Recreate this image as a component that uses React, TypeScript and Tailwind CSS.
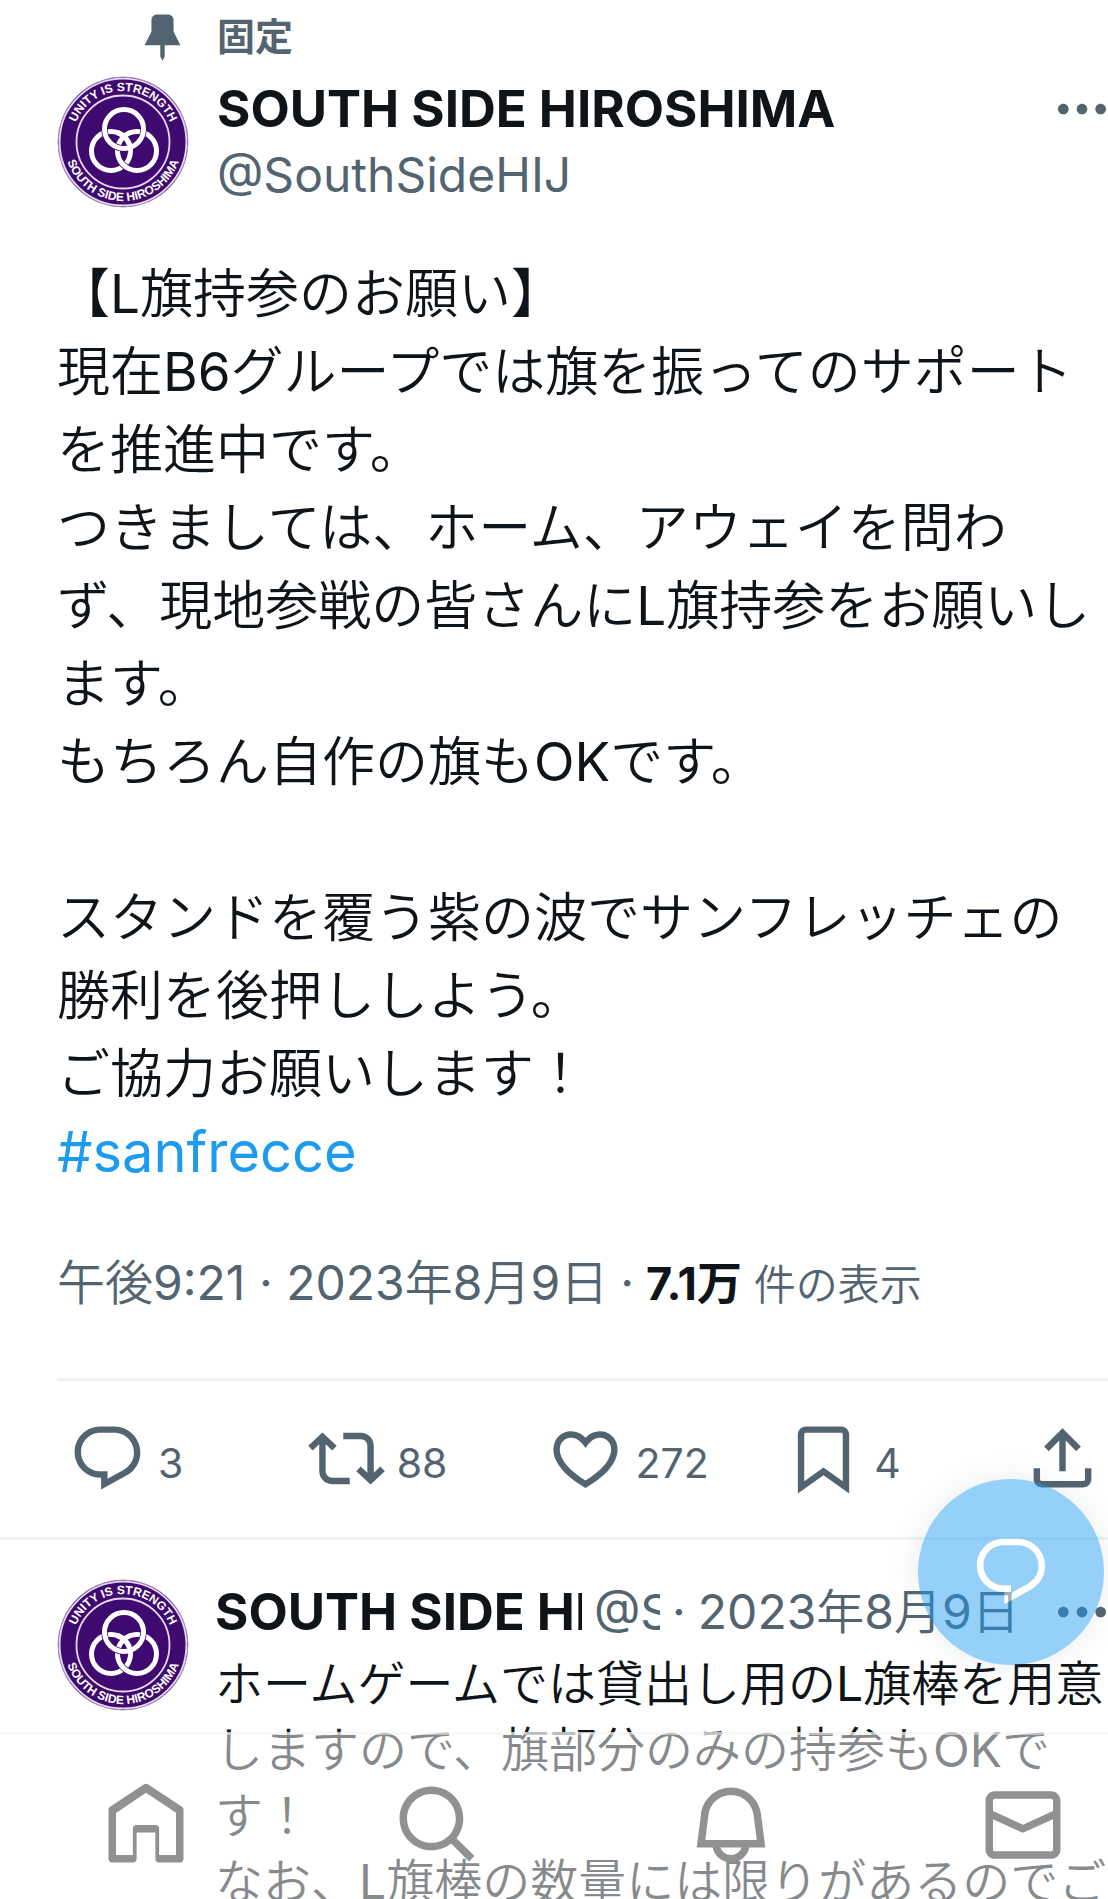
import React, { useId } from 'react';

const paths = {
  pin: 'M7 4.5C7 3.12 8.12 2 9.5 2h5C15.88 2 17 3.12 17 4.5v5.26L20.12 16H13v5l-1 2-1-2v-5H3.88L7 9.76V4.5z',
  more: 'M3 12c0-1.1.9-2 2-2s2 .9 2 2-.9 2-2 2-2-.9-2-2zm9 2c1.1 0 2-.9 2-2s-.9-2-2-2-2 .9-2 2 .9 2 2 2zm7 0c1.1 0 2-.9 2-2s-.9-2-2-2-2 .9-2 2 .9 2 2 2z',
  reply: 'M1.751 10c0-4.42 3.584-8 8.005-8h4.366c4.49 0 8.129 3.64 8.129 8.13 0 2.96-1.607 5.68-4.196 7.11l-8.054 4.46v-3.69h-.067c-4.49.1-8.183-3.51-8.183-8.01zm8.005-6c-3.317 0-6.005 2.69-6.005 6 0 3.37 2.77 6.08 6.138 6.01l.351-.01h1.761v2.3l5.087-2.81c1.951-1.08 3.163-3.13 3.163-5.36 0-3.39-2.744-6.13-6.129-6.13H9.756z',
  repost: 'M4.5 3.88l4.432 4.14-1.364 1.46L5.5 7.55V16c0 1.1.896 2 2 2H13v2H7.5c-2.209 0-4-1.79-4-4V7.55L1.432 9.48.068 8.02 4.5 3.88zM16.5 6H11V4h5.5c2.209 0 4 1.79 4 4v8.45l2.068-1.93 1.364 1.46-4.432 4.14-4.432-4.14 1.364-1.46 2.068 1.93V8c0-1.1-.896-2-2-2z',
  like: 'M16.697 5.5c-1.222-.06-2.679.51-3.89 2.16l-.805 1.09-.806-1.09C9.984 6.01 8.526 5.44 7.304 5.5c-1.243.07-2.349.78-2.91 1.91-.552 1.12-.633 2.78.479 4.82 1.074 1.97 3.257 4.27 7.129 6.61 3.87-2.34 6.052-4.64 7.126-6.61 1.111-2.04 1.03-3.7.477-4.82-.561-1.13-1.666-1.84-2.908-1.91zm4.187 7.69c-1.351 2.48-4.001 5.12-8.379 7.67l-.503.3-.504-.3c-4.379-2.55-7.029-5.19-8.382-7.67-1.36-2.5-1.41-4.86-.514-6.67.887-1.79 2.647-2.91 4.601-3.01 1.651-.09 3.368.56 4.798 2.01 1.429-1.45 3.146-2.1 4.796-2.01 1.954.1 3.714 1.22 4.601 3.01.896 1.81.846 4.17-.514 6.67z',
  bookmark: 'M4 4.5C4 3.12 5.119 2 6.5 2h11C18.881 2 20 3.12 20 4.5v18.44l-8-5.71-8 5.71V4.5zM6.5 4c-.276 0-.5.22-.5.5v14.56l6-4.29 6 4.29V4.5c0-.28-.224-.5-.5-.5h-11z',
  share: 'M12 2.59l5.7 5.7-1.41 1.42L13 6.41V16h-2V6.41l-3.3 3.3-1.41-1.42L12 2.59zM21 15v3.5c0 1.38-1.12 2.5-2.5 2.5h-13C4.12 21 3 19.88 3 18.5V15h2v3.5c0 .28.22.5.5.5h13c.28 0 .5-.22.5-.5V15h2z',
  home: 'M21.591 7.146L12.52 1.157c-.316-.21-.724-.21-1.04 0l-9.071 5.99c-.26.173-.409.456-.409.757v13.183c0 .502.418.913.929.913h5.642c.511 0 .929-.41.929-.913V14h5v7.087c0 .502.418.913.929.913h5.642c.511 0 .929-.41.929-.913V7.904c0-.301-.158-.584-.409-.758zM20 20h-4.5v-7.087c0-.502-.418-.913-.928-.913H9.428c-.511 0-.928.41-.928.913V20H4V8.773l8-5.342 8 5.333V20z',
  search: 'M10.25 3.75c-3.59 0-6.5 2.91-6.5 6.5s2.91 6.5 6.5 6.5c1.795 0 3.419-.726 4.596-1.904 1.178-1.177 1.904-2.801 1.904-4.596 0-3.59-2.91-6.5-6.5-6.5zm-8.5 6.5c0-4.694 3.806-8.5 8.5-8.5s8.5 3.806 8.5 8.5c0 1.986-.682 3.815-1.824 5.262l4.781 4.781-1.414 1.414-4.781-4.781c-1.447 1.142-3.276 1.824-5.262 1.824-4.694 0-8.5-3.806-8.5-8.5z',
  bell: 'M19.993 9.042C19.48 5.017 16.054 2 11.996 2s-7.49 3.021-7.999 7.051L2.866 18H7.1c.463 2.282 2.481 4 4.9 4s4.437-1.718 4.9-4h4.236l-1.143-8.958zM12 20c-1.306 0-2.417-.835-2.829-2h5.658c-.412 1.165-1.523 2-2.829 2zm-6.866-4l.847-6.698C6.364 6.272 8.941 4 11.996 4s5.627 2.268 6.013 5.295L18.864 16H5.134z',
  mail: 'M1.998 5.5c0-1.381 1.119-2.5 2.5-2.5h15c1.381 0 2.5 1.119 2.5 2.5v13c0 1.381-1.119 2.5-2.5 2.5h-15c-1.381 0-2.5-1.119-2.5-2.5v-13zm2.5-.5c-.276 0-.5.224-.5.5v2.764l8 3.638 8-3.636V5.5c0-.276-.224-.5-.5-.5h-15zm15.5 5.463l-8 3.636-8-3.638V18.5c0 .276.224.5.5.5h15c.276 0 .5-.224.5-.5v-8.037z',
};

type IconName = keyof typeof paths;

interface IconProps {
  name: IconName;
  className?: string;
}

const Icon: React.FC<IconProps> = ({ name, className }) => (
  <svg viewBox="0 0 24 24" fill="currentColor" aria-hidden="true" className={className}>
    <path d={paths[name]} />
  </svg>
);

const Avatar: React.FC = () => {
  const id = useId();
  return (
    <a href="#profile" aria-label="SOUTH SIDE HIROSHIMA" className="shrink-0">
      <svg viewBox="0 0 132 132" className="size-[132px]">
        <defs>
          <path id={`${id}top`} d="M15 66a51 51 0 0 1 102 0" />
          <path id={`${id}bottom`} d="M7 66a59 59 0 0 0 118 0" />
        </defs>
        <circle cx="66" cy="66" r="65" fill="#3f0a70" stroke="#a48bb8" strokeWidth="1" />
        <circle cx="66" cy="66" r="63.4" fill="none" stroke="#e6d9ef" strokeWidth="1.8" />
        <circle cx="66" cy="66" r="46.5" fill="none" stroke="#e6d9ef" strokeWidth="1.8" />
        <g fill="none">
          <circle cx="54" cy="75" r="19.5" stroke="#fff" strokeWidth="5" />
          <circle cx="80" cy="75" r="19.5" stroke="#3f0a70" strokeWidth="6.4" />
          <circle cx="80" cy="75" r="19.5" stroke="#fff" strokeWidth="5" />
          <circle cx="67" cy="53" r="19.5" stroke="#3f0a70" strokeWidth="6.4" />
          <circle cx="67" cy="53" r="19.5" stroke="#fff" strokeWidth="5" />
          <path d="M60 56.5a19.5 19.5 0 0 1 13.5 18.5" stroke="#fff" strokeWidth="5" />
        </g>
        <g
          fill="#fff"
          textAnchor="middle"
          className="font-['Liberation_Sans',sans-serif] font-bold"
        >
          <text fontSize="12">
            <textPath href={`#${id}top`} startOffset="50%">UNITY IS STRENGTH</textPath>
          </text>
          <text fontSize="12">
            <textPath href={`#${id}bottom`} startOffset="50%">SOUTH SIDE HIROSHIMA</textPath>
          </text>
        </g>
      </svg>
    </a>
  );
};

const MoreButton: React.FC = () => (
  <button type="button" aria-label="もっと見る" className="-mr-1.5 ml-auto shrink-0 text-[#536471]">
    <Icon name="more" className="size-16" />
  </button>
);

const actions: { icon: IconName; label: string; count: string }[] = [
  { icon: 'reply', label: '返信', count: '3' },
  { icon: 'repost', label: 'リポスト', count: '88' },
  { icon: 'like', label: 'いいね', count: '272' },
  { icon: 'bookmark', label: 'ブックマーク', count: '4' },
];

const PinnedTweet: React.FC = () => (
  <article className="border-b-3 border-[#eff3f4] pl-[57px]">
    <div className="flex items-center gap-7 pt-2">
      <div className="flex w-[132px] justify-end text-[#536471]">
        <Icon name="pin" className="size-[53px]" />
      </div>
      <span className="text-[38px] leading-[56px] font-bold text-[#536471]">固定</span>
    </div>
    <div className="mt-3 flex gap-7">
      <Avatar />
      <div className="flex min-w-0 flex-1 flex-col">
        <div className="flex items-center">
          <a href="#profile" className="text-[51px] leading-[66px] font-bold">
            SOUTH SIDE HIROSHIMA
          </a>
          <MoreButton />
        </div>
        <span className="text-[48px] leading-[66px] text-[#536471]">@SouthSideHIJ</span>
      </div>
    </div>
    <p className="mt-[47px] font-[Inter,'Noto_Sans_CJK_JP_DemiLight','Noto_Sans_CJK_JP',sans-serif] text-[53px] leading-[78px]">
      【L旗持参のお願い】
      <br />
      現在B6グループでは旗を振ってのサポートを推進中です。
      <br />
      つきましては、ホーム、アウェイを問わず、現地参戦の皆さんにL旗持参をお願いします。
      <br />
      もちろん自作の旗もOKです。
      <br />
      <br />
      スタンドを覆う紫の波でサンフレッチェの勝利を後押ししよう。
      <br />
      ご協力お願いします！
      <br />
      <a href="#sanfrecce" className="text-[56px] text-[#1d9bf0]">#sanfrecce</a>
    </p>
    <div className="mt-[58px] flex items-baseline gap-3 font-[Inter,'Noto_Sans_CJK_JP_DemiLight','Noto_Sans_CJK_JP',sans-serif] text-[48px] leading-[66px] text-[#536471]">
      <time dateTime="2023-08-09T21:21">午後9:21 · 2023年8月9日</time>
      <span>·</span>
      <span className="text-[42px]">
        <b className="font-[Inter,'Noto_Sans_CJK_JP',sans-serif] text-[45px] font-bold text-[#0f1419]">
          7.1万
        </b>{' '}
        件の表示
      </span>
    </div>
    <div className="mt-15 flex border-t-3 border-[#eff3f4] pt-[39px] pb-10 pl-3 text-[#536471]">
      {actions.map((action) => (
        <button
          key={action.icon}
          type="button"
          aria-label={`${action.count} ${action.label}`}
          className="flex flex-1 items-center gap-3"
        >
          <Icon name={action.icon} className="size-[77px]" />
          <span className="pt-2 text-[41px] leading-[52px]">{action.count}</span>
        </button>
      ))}
      <button type="button" aria-label="共有" className="pr-[7px]">
        <Icon name="share" className="size-[77px]" />
      </button>
    </div>
  </article>
);

const ReplyTweet: React.FC = () => (
  <article className="flex gap-[26px] pt-[39px] pl-[57px] font-[Inter,'Noto_Sans_CJK_JP_DemiLight','Noto_Sans_CJK_JP',sans-serif]">
    <Avatar />
    <div className="min-w-0 flex-1">
      <div className="flex items-center text-[48px] leading-[66px] whitespace-nowrap text-[#536471]">
        <a
          href="#profile"
          className="w-[367px] overflow-hidden text-[51px] font-bold text-[#0f1419]"
        >
          SOUTH SIDE HI
        </a>
        <span className="ml-3 w-[66px] overflow-hidden">@S</span>
        <span className="mx-3">·</span>
        <time dateTime="2023-08-09">2023年8月9日</time>
        <MoreButton />
      </div>
      <p className="mt-1.5 text-[48px] leading-[66px]">
        ホームゲームでは貸出し用のL旗棒を用意しますので、旗部分のみの持参もOKです！
        <br />
        なお、L旗棒の数量には限りがあるのでご
      </p>
    </div>
  </article>
);

const tabs: { icon: IconName; label: string }[] = [
  { icon: 'home', label: 'ホーム' },
  { icon: 'search', label: '検索' },
  { icon: 'bell', label: '通知' },
  { icon: 'mail', label: 'メッセージ' },
];

const BottomNav: React.FC = () => (
  <nav className="fixed inset-x-0 bottom-0 flex justify-between border-t-3 border-[#eff3f4]/50 bg-white/50 pt-[45px] pr-10 pb-[29px] pl-[101px] text-[#8f9193]">
    {tabs.map((tab) => (
      <a key={tab.icon} href={`#${tab.icon}`} aria-label={tab.label}>
        <Icon name={tab.icon} className="size-[90px]" />
      </a>
    ))}
  </nav>
);

const App: React.FC = () => {
  return (
    <div
      lang="ja"
      className="h-screen overflow-hidden bg-white font-[Inter,'Noto_Sans_CJK_JP',sans-serif] text-[#0f1419]"
    >
      <main>
        <PinnedTweet />
        <ReplyTweet />
      </main>
      <button
        type="button"
        aria-label="返信をポスト"
        className="fixed right-1 bottom-[234px] flex size-[186px] items-center justify-center rounded-full bg-[#1d9bf0] text-white opacity-[0.47] shadow-[0_0_30px_rgba(101,119,134,0.3)]"
      >
        <Icon name="reply" className="size-20" />
      </button>
      <BottomNav />
    </div>
  );
};

export default App;
